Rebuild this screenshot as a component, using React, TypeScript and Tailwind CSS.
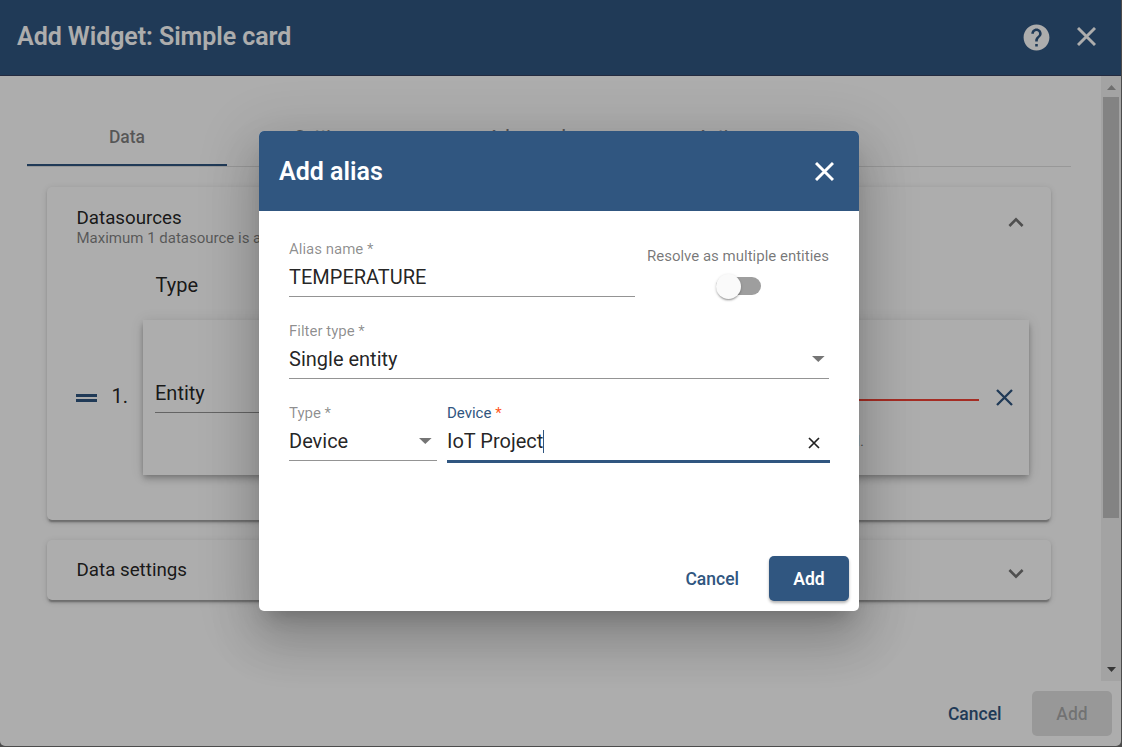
import React from 'react';
import { MdHelp } from 'react-icons/md';

function Chevron({ up = false }: { up?: boolean }) {
  return (
    <svg width="16" height="12" viewBox="0 0 16 12" className="block" fill="none" stroke="#757575" strokeWidth="2.6">
      <path d={up ? 'M1.4 9 8 2.4l6.6 6.6' : 'M1.4 2 8 8.6l6.6-6.6'} />
    </svg>
  );
}

function Cross({ size, width, color }: { size: number; width: number; color: string }) {
  return (
    <svg width={size} height={size} viewBox={`0 0 ${size} ${size}`} className="block" stroke={color} strokeWidth={width}>
      <path d={`M1 1 ${size - 1} ${size - 1}M${size - 1} 1 1 ${size - 1}`} />
    </svg>
  );
}

function Caret() {
  return (
    <svg width="13" height="6" viewBox="0 0 13 6" className="block shrink-0" fill="#757575">
      <path d="M0 0h12.6L6.3 6z" />
    </svg>
  );
}

function Tab({ label }: { label: string }) {
  return (
    <div className="flex h-[59px] w-[200px] items-center justify-center pt-px text-[17.5px] font-medium text-black/50">
      {label}
    </div>
  );
}

function ScrollBar() {
  return (
    <div className="flex w-5 shrink-0 flex-col items-center justify-between bg-[#f1f1f1] pt-[9px] pb-[9px]">
      <div className="flex flex-col items-center gap-[7px]">
        <svg width="9" height="5" viewBox="0 0 9 5" className="block" fill="#a3a3a3">
          <path d="M4.5 0 9 5H0z" />
        </svg>
        <div className="h-[421px] w-4 bg-[#c1c1c1]" />
      </div>
      <svg width="9" height="5" viewBox="0 0 9 5" className="block" fill="#505050">
        <path d="M0 0h9L4.5 5z" />
      </svg>
    </div>
  );
}

const panel =
  'w-[1004px] rounded-[5px] bg-white shadow-[0_3.75px_1.25px_-2.5px_rgba(0,0,0,0.2),0_2.5px_2.5px_0_rgba(0,0,0,0.14),0_1.25px_6.25px_0_rgba(0,0,0,0.12)]';

function WidgetDialog() {
  return (
    <div className="flex h-[746px] w-[1121px] flex-col overflow-hidden rounded-b-[5px] bg-white">
      <header className="flex h-[76px] shrink-0 items-center border-b border-[#35405f] bg-[#305680] pr-[25px] pl-4 text-white">
        <h1 className="grow pb-0.5 pl-px text-[25px] font-semibold tracking-[-0.06px]">Add Widget: Simple card</h1>
        <MdHelp size={31} className="mr-[25px] mb-px" />
        <div className="mb-0.5">
          <Cross size={19} width={2.9} color="#fff" />
        </div>
      </header>
      <div className="flex h-[605px] shrink-0">
        <div className="flex grow flex-col pt-[31px] pl-[27px]">
          <div className="flex w-[1044px] border-b border-black/12">
            <Tab label="Data" />
            <Tab label="Settings" />
            <Tab label="Advanced" />
            <Tab label="Actions" />
          </div>
          <div className="-mt-[3px] h-0.5 w-[200px] bg-[#305680]" />
          <section className={`${panel} mt-[21px] ml-5 h-[333px]`}>
            <div className="flex h-[71px] items-center justify-between pr-[27px] pl-[29.5px]">
              <div className="pt-[8px]">
                <div className="text-[18.75px] leading-[22px]">Datasources</div>
                <div className="text-[15px] leading-[18px] text-black/50">Maximum 1 datasource is allowed.</div>
              </div>
              <Chevron up />
            </div>
            <div className="pt-[14px] pl-[108.5px] text-[20px] leading-[26px]">Type</div>
            <div className="mt-[22px] flex items-center pl-[29px]">
              <div className="flex h-2 w-[21px] flex-col justify-between">
                <div className="h-[3px] bg-[#305680]" />
                <div className="h-[3px] bg-[#305680]" />
              </div>
              <div className="w-[46px] pb-[3px] pl-[14.5px] text-[20px]">1.</div>
              <div className="flex h-[155px] w-[886px] items-center bg-white pl-3 shadow-[0_2.5px_5px_-1.25px_rgba(0,0,0,0.2),0_5px_6.25px_0_rgba(0,0,0,0.14),0_1.25px_12.5px_0_rgba(0,0,0,0.12)]">
                <div className="mb-0.5 h-[33px] w-[175px] border-b border-black/42 text-[20px] leading-[26px]">Entity</div>
                <div className="ml-5 flex w-[629px] flex-col pt-[54px]">
                  <div className="h-0.5 bg-[#f44336]" />
                  <div className="pt-[30px] pr-[115px] text-right text-[15px] leading-[20px] text-black/54">
                    Maximum 1 timeseries data key is allowed.
                  </div>
                </div>
                <div className="pl-[17px]">
                  <Cross size={17} width={2.3} color="#305680" />
                </div>
              </div>
            </div>
          </section>
          <section className={`${panel} mt-5 ml-5 flex h-[60px] items-center justify-between pr-[27px] pl-[29.5px]`}>
            <div className="text-[18.75px]">Data settings</div>
            <div className="pt-[7px]">
              <Chevron />
            </div>
          </section>
        </div>
        <ScrollBar />
      </div>
      <footer className="flex grow items-center justify-end pr-[9px] text-[17.5px] font-medium">
        <span className="mt-0.5 mr-[30.5px] text-[#305680]">Cancel</span>
        <div className="flex h-[45px] w-20 items-center justify-center rounded-[5px] bg-black/12 pt-0.5 text-black/26">Add</div>
      </footer>
    </div>
  );
}

function FieldLabel({ children }: { children: React.ReactNode }) {
  return <div className="h-[18px] text-[15px] leading-[17px] text-black/45">{children}</div>;
}

function AliasDialog() {
  return (
    <div className="flex h-[480px] w-[600px] flex-col rounded-[5px] bg-white shadow-[0_13.75px_18.75px_-8.75px_rgba(0,0,0,0.2),0_30px_47.5px_3.75px_rgba(0,0,0,0.14),0_11.25px_57.5px_10px_rgba(0,0,0,0.12)]">
      <header className="flex h-20 items-center justify-between rounded-t-[5px] bg-[#305680] pr-[25.5px] pl-5 text-white">
        <h2 className="pt-0.5 text-[25px] font-semibold">Add alias</h2>
        <div className="mt-px">
          <Cross size={19} width={2.9} color="#fff" />
        </div>
      </header>
      <div className="grow px-[30px] pt-[30px]">
        <div className="flex">
          <div className="h-14 w-[346px] border-b border-black/42">
            <FieldLabel>Alias name *</FieldLabel>
            <div className="pt-[5px] text-[20px] leading-[26px]">TEMPERATURE</div>
          </div>
          <div className="flex grow flex-col items-end pt-[5px]">
            <div className="text-[15px] leading-[20px] text-black/54">Resolve as multiple entities</div>
            <div className="mt-[11px] mr-[68px] flex h-[18px] w-[45px] items-center rounded-full bg-[#9e9e9e]">
              <div className="size-[25px] shrink-0 rounded-full bg-[#fafafa] shadow-[0_2px_2px_-1px_rgba(0,0,0,0.3),0_1px_3px_rgba(0,0,0,0.2)]" />
            </div>
          </div>
        </div>
        <div className="mt-[26px] h-14 border-b border-black/42">
          <FieldLabel>Filter type *</FieldLabel>
          <div className="flex items-center justify-between pt-[5px] pr-1 text-[20px] leading-[26px]">
            Single entity
            <Caret />
          </div>
        </div>
        <div className="mt-[26px] flex gap-2.5">
          <div className="h-14 w-[148px] border-b border-black/42">
            <FieldLabel>Type *</FieldLabel>
            <div className="flex items-center justify-between pt-[5px] pr-[5px] text-[20px] leading-[26px]">
              Device
              <Caret />
            </div>
          </div>
          <div className="-mr-px h-[58px] grow border-b-[3px] border-[#305680]">
            <div className="h-[18px] text-[15px] leading-[17px] text-[#305680]">
              Device <span className="text-[#ff5722]">*</span>
            </div>
            <div className="flex items-center pt-[5px] text-[20px] leading-[26px]">
              IoT Project
              <div className="h-[23px] w-px bg-[#305680]" />
              <div className="grow" />
              <div className="mt-1 mr-2.5">
                <Cross size={12} width={1.7} color="#222" />
              </div>
            </div>
          </div>
        </div>
      </div>
      <footer className="flex items-center justify-end pr-2.5 pb-2.5 text-[17.5px] font-medium">
        <span className="mt-0.5 mr-[30px] text-[#305680]">Cancel</span>
        <button className="h-[45px] w-20 rounded-[5px] bg-[#305680] pt-0.5 font-semibold text-white shadow-[0_2px_3px_rgba(0,0,0,0.3)]">Add</button>
      </footer>
    </div>
  );
}

export default function App() {
  return (
    <div className="relative h-[747px] w-[1122px] overflow-hidden bg-[#707070] font-['Roboto',sans-serif] text-black/87">
      <WidgetDialog />
      <div className="absolute inset-0 flex justify-center bg-black/32 pt-[131px] pr-1">
        <AliasDialog />
      </div>
    </div>
  );
}
